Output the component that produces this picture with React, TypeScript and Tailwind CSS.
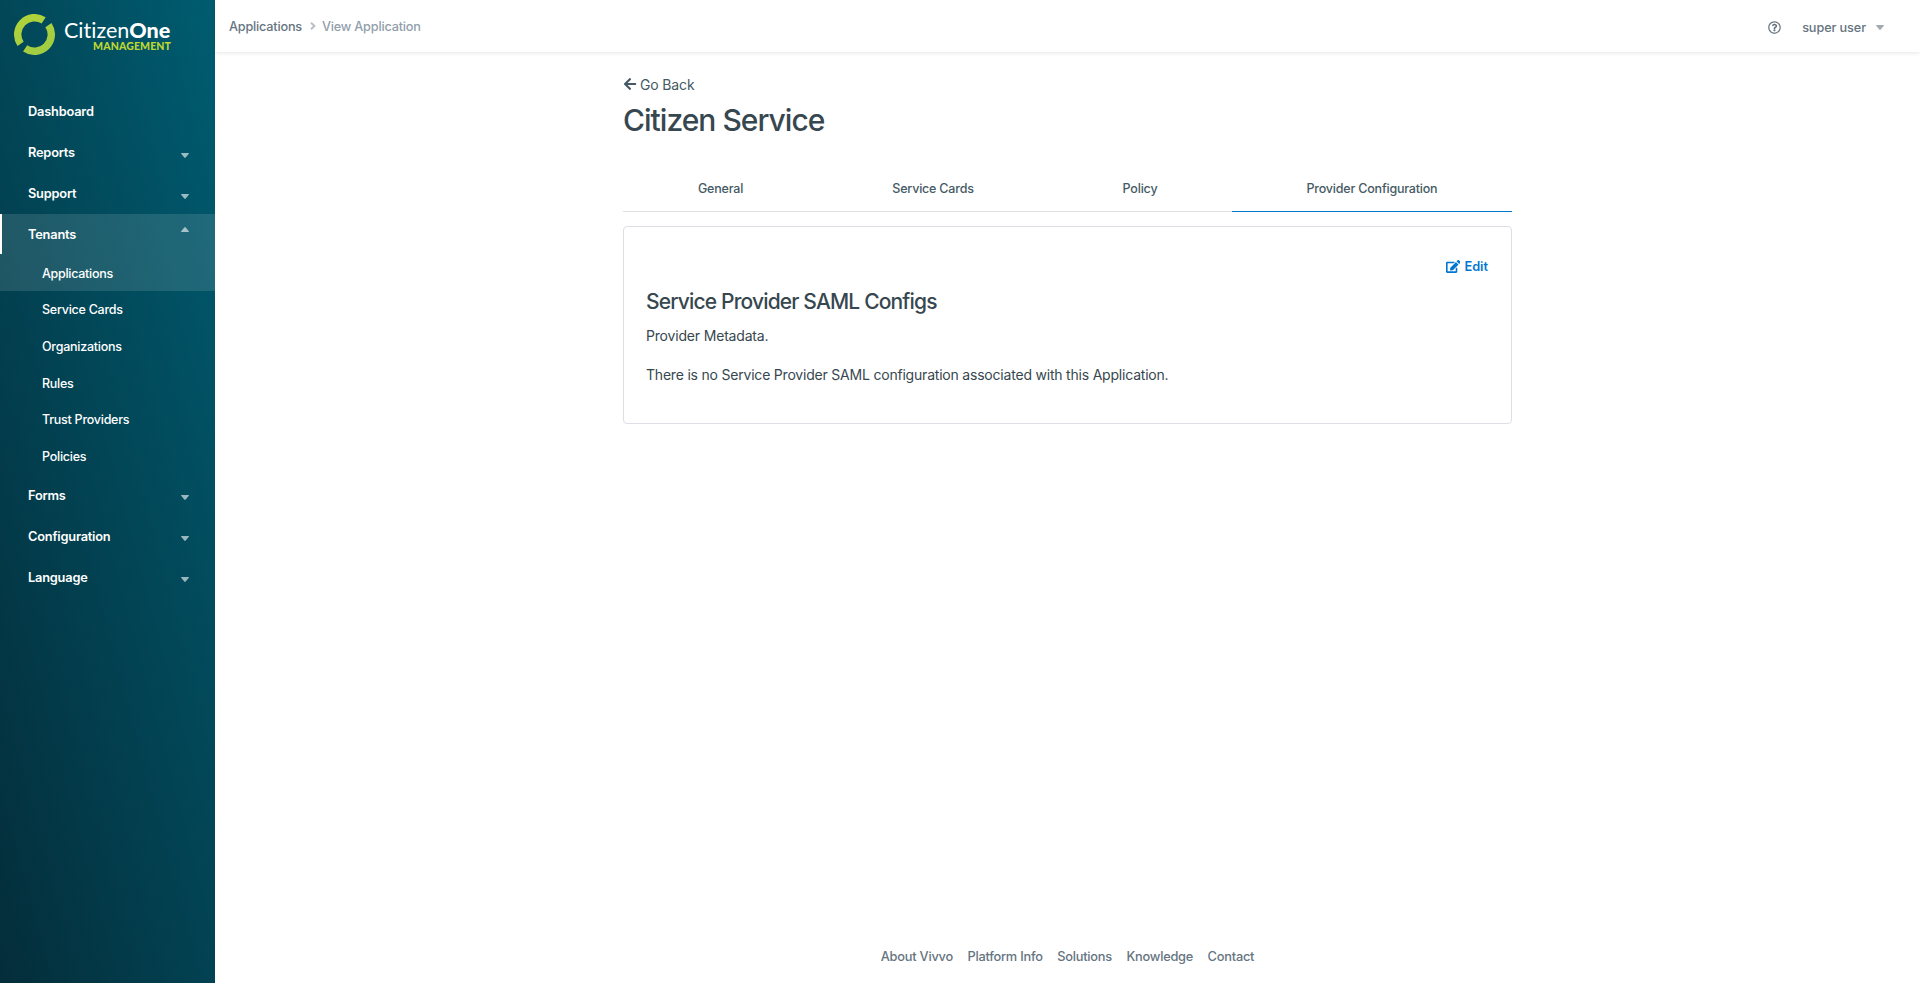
import { FaArrowLeft, FaEdit, FaRegQuestionCircle } from "react-icons/fa";

function Caret({ up = false, className = "" }: { up?: boolean; className?: string }) {
  return (
    <svg viewBox="0 0 8 5" className={`h-[5px] w-2 shrink-0 ${up ? "rotate-180" : ""} ${className}`} fill="currentColor">
      <path d="M.5 0h7c.45 0 .65.5.35.85L4.75 4.5c-.4.45-1.1.45-1.5 0L.15.85C-.15.5.05 0 .5 0z" />
    </svg>
  );
}

function Logo() {
  return (
    <div className="flex h-[91px] items-start pl-[14px] pt-[14px]">
      <svg viewBox="0 0 41 41" className="size-[41px] shrink-0" fill="none" stroke="url(#ring)" strokeWidth="7.4">
        <defs>
          <linearGradient id="ring" gradientUnits="userSpaceOnUse" x1="8" y1="0" x2="30" y2="41">
            <stop offset="0" stopColor="#b1d33a" />
            <stop offset="1" stopColor="#9fcc45" />
          </linearGradient>
        </defs>
        <path d="M29.65 6.41A16.8 16.8 0 0 0 6.57 29.89" />
        <path d="M11.11 34.43A16.8 16.8 0 0 0 34.43 11.11" />
      </svg>
      <div className="ml-[9px] flex w-[107px] flex-col pt-[5px] font-['Lato',sans-serif]">
        <div className="flex h-[22px] items-center whitespace-nowrap text-[21.5px] leading-[22px] text-white [font-variant-ligatures:none]">
          <span>Citizen</span>
          <span className="font-black">One</span>
        </div>
        <div className="h-[11px] whitespace-nowrap text-right text-[10.5px] font-black leading-[11px] tracking-[0.12px] text-[#bfd730]">
          MANAGEMENT
        </div>
      </div>
    </div>
  );
}

function Section({ label, caret = true }: { label: string; caret?: boolean }) {
  return (
    <li className="flex h-[41px] items-center justify-between pt-px pl-7 pr-[26px] text-[12.8px] font-semibold tracking-[-0.2px]">
      <span>{label}</span>
      {caret && <Caret className="mt-1 text-white/60" />}
    </li>
  );
}

const tenantLinks = ["Service Cards", "Organizations", "Rules", "Trust Providers", "Policies"];
const footerLinks = ["About Vivvo", "Platform Info", "Solutions", "Knowledge", "Contact"];

function Sidebar() {
  return (
    <aside className="w-[215px] shrink-0 bg-[linear-gradient(75deg,#042d3a,#005c70)] text-white">
      <Logo />
      <ul>
        <Section label="Dashboard" caret={false} />
        <Section label="Reports" />
        <Section label="Support" />
        <li>
          <div className="bg-white/[0.12]">
            <div className="flex h-10 items-center justify-between border-l-2 border-white pt-0.5 pl-[26px] pr-[26px] text-[12.8px] font-semibold tracking-[-0.2px]">
              <span>Tenants</span>
              <Caret up className="mb-3 text-white/60" />
            </div>
            <div className="flex h-[37px] items-center pt-[3px] pl-[42px] text-[12.5px] font-medium tracking-[-0.28px]">Applications</div>
          </div>
          <ul>
            {tenantLinks.map((label) => (
              <li key={label} className="flex h-[36.7px] items-center pt-[2.8px] pl-[42px] text-[12.5px] font-medium tracking-[-0.25px]">
                {label}
              </li>
            ))}
          </ul>
        </li>
        <Section label="Forms" />
        <Section label="Configuration" />
        <Section label="Language" />
      </ul>
    </aside>
  );
}

function Header() {
  return (
    <header className="flex h-[52px] shrink-0 items-center justify-between pl-[14px] pr-9 text-[12.7px] font-medium text-[#66747f] shadow-[0_1px_4px_rgba(0,0,0,0.1)]">
      <nav className="flex items-center pt-px tracking-[-0.2px]">
        <span>Applications</span>
        <svg viewBox="0 0 6 8" className="ml-2 mr-1.5 h-2 w-1.5 text-[#b9bfc5]" fill="none" stroke="currentColor" strokeWidth="2">
          <path d="M1 .8 4.4 4 1 7.2" />
        </svg>
        <span className="text-[#919eab]">View Application</span>
      </nav>
      <div className="flex items-center pt-[3px]">
        <FaRegQuestionCircle className="size-[13px]" />
        <span className="ml-[21px] tracking-[-0.1px]">super user</span>
        <Caret className="ml-2.5 text-[#a3a9b0]" />
      </div>
    </header>
  );
}

export default function App() {
  return (
    <div className="flex h-[983px] w-full overflow-hidden bg-white font-['Inter',sans-serif] text-[#37474f]">
      <Sidebar />
      <div className="flex min-w-0 flex-1 flex-col">
        <Header />
        <main className="mx-auto w-[889px] flex-1">
          <div className="mt-[22px] flex h-5 items-center text-[14px] tracking-[-0.15px] text-[#455a64]">
            <FaArrowLeft className="mr-[3px] size-[14px]" />
            <span>Go Back</span>
          </div>
          <h1 className="mt-[5px] flex h-[42px] items-center text-[30px] font-[450] tracking-[-0.98px]">Citizen Service</h1>
          <div className="mt-[25px] grid h-[46px] grid-cols-[195px_229px_185px_280px] text-center text-[12.5px] font-medium leading-[44px] tracking-[-0.2px] text-[#455a64]">
            <div className="border-b border-[#dee0e3] pt-px">General</div>
            <div className="border-b border-[#dee0e3] pt-px pl-px">Service Cards</div>
            <div className="border-b border-[#dee0e3] pt-px pl-px">Policy</div>
            <div className="border-b border-[#0079d0] pt-px">Provider Configuration</div>
          </div>
          <section className="mt-[14px] h-[198px] rounded-[4px] border border-[#dedfe6] px-[22px]">
            <div className="mt-[30px] flex h-5 items-center justify-end pr-px text-[12.8px] font-semibold text-[#0076d1]">
              <FaEdit className="mr-1 mb-0.5 h-[13px] w-[14.5px]" />
              <span>Edit</span>
            </div>
            <h2 className="mt-[11px] flex h-7 items-center text-[21px] font-[450] tracking-[-0.84px]">Service Provider SAML Configs</h2>
            <p className="mt-[10px] h-5 text-[14px] leading-5 tracking-[-0.18px]">Provider Metadata.</p>
            <p className="mt-[19px] h-5 text-[14px] leading-5 tracking-[-0.205px]">
              There is no Service Provider SAML configuration associated with this Application.
            </p>
          </section>
        </main>
        <footer className="flex h-[52px] items-center justify-center gap-[14.5px] text-[12.8px] font-medium tracking-[-0.23px] text-[#66747f]">
          {footerLinks.map((label) => (
            <span key={label}>{label}</span>
          ))}
        </footer>
      </div>
    </div>
  );
}
